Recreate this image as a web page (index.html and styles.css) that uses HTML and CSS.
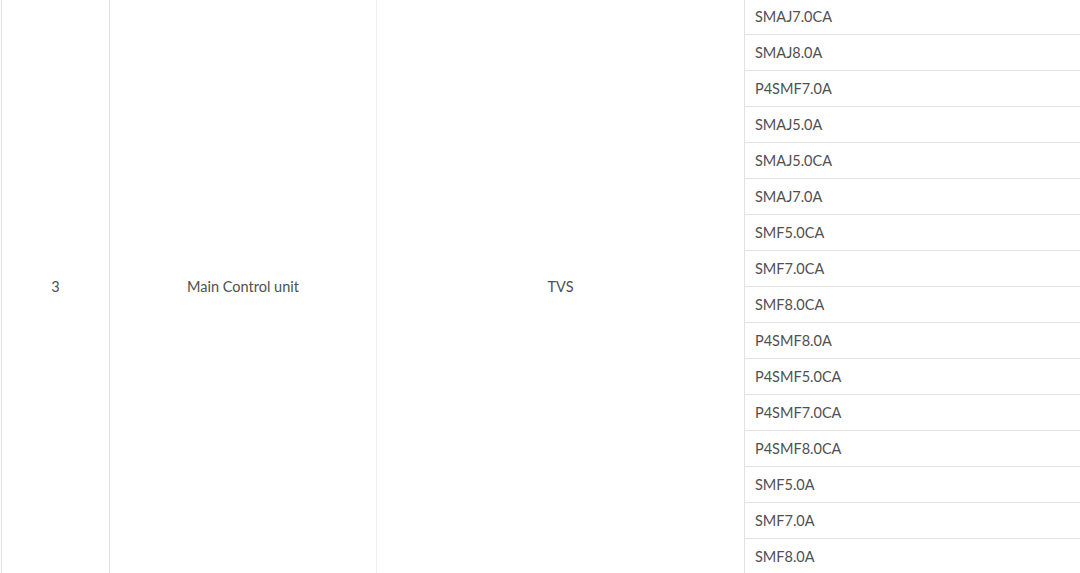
FILE: index.html
```html
<!DOCTYPE html>
<html>
<head>
<meta charset="utf-8">
<link rel="stylesheet" href="styles.css">
</head>
<body>
<table class="parts">
  <colgroup>
    <col class="c1"><col class="c2"><col class="c3"><col class="c4">
  </colgroup>
  <tbody>
    <tr>
      <td class="merged" rowspan="16">3</td>
      <td class="merged m2" rowspan="16">Main Control unit</td>
      <td class="merged" rowspan="16">TVS</td>
      <td class="part">SMAJ7.0CA</td>
    </tr>
    <tr><td class="part">SMAJ8.0A</td></tr>
    <tr><td class="part">P4SMF7.0A</td></tr>
    <tr><td class="part">SMAJ5.0A</td></tr>
    <tr><td class="part">SMAJ5.0CA</td></tr>
    <tr><td class="part">SMAJ7.0A</td></tr>
    <tr><td class="part">SMF5.0CA</td></tr>
    <tr><td class="part">SMF7.0CA</td></tr>
    <tr><td class="part">SMF8.0CA</td></tr>
    <tr><td class="part">P4SMF8.0A</td></tr>
    <tr><td class="part">P4SMF5.0CA</td></tr>
    <tr><td class="part">P4SMF7.0CA</td></tr>
    <tr><td class="part">P4SMF8.0CA</td></tr>
    <tr><td class="part">SMF5.0A</td></tr>
    <tr><td class="part">SMF7.0A</td></tr>
    <tr><td class="part">SMF8.0A</td></tr>
  </tbody>
</table>
</body>
</html>
```

FILE: styles.css
```css
html, body {
  margin: 0;
  padding: 0;
  background: #ffffff;
  overflow: hidden;
}

.parts {
  border-collapse: collapse;
  table-layout: fixed;
  width: 1079px;
  margin: -2px 0 0 1px;
  font-family: Lato, "Liberation Sans", sans-serif;
  font-size: 14.5px;
  color: #505050;
}

.c1 { width: 108px; }
.c2 { width: 267px; }
.c3 { width: 368px; }
.c4 { width: 336px; }

.parts td {
  border: 1px solid #e2e2e2;
  padding: 0;
}

.merged {
  text-align: center;
  vertical-align: middle;
}

.parts td.m2 {
  border-right-color: #f0f0f0;
}

.part {
  height: 35px;
  padding-left: 10px !important;
  text-align: left;
  vertical-align: middle;
}
```
